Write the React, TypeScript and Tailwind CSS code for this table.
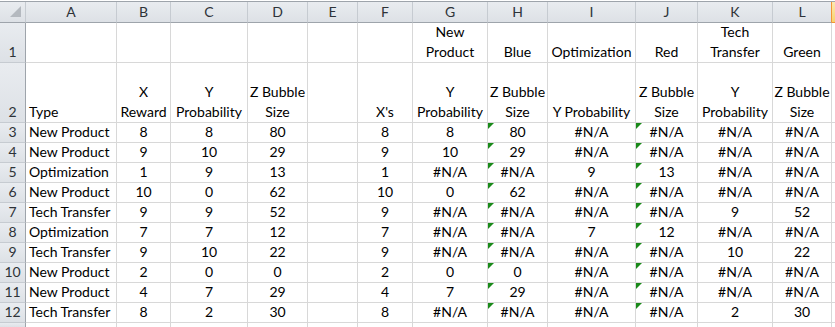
import { Fragment } from 'react'

const NA = '#N/A'

const colLetters = ['A', 'B', 'C', 'D', 'E', 'F', 'G', 'H', 'I', 'J', 'K', 'L']

const row1: string[][] = [[], [], [], [], [], [], ['New', 'Product'], ['Blue'], ['Optimization'], ['Red'], ['Tech', 'Transfer'], ['Green']]

const row2: string[][] = [
  ['Type'],
  ['X', 'Reward'],
  ['Y', 'Probability'],
  ['Z Bubble', 'Size'],
  [],
  ["X's"],
  ['Y', 'Probability'],
  ['Z Bubble', 'Size'],
  ['Y Probability'],
  ['Z Bubble', 'Size'],
  ['Y', 'Probability'],
  ['Z Bubble', 'Size'],
]

const data: (string | number)[][] = [
  ['New Product', 8, 8, 80, '', 8, 8, 80, NA, NA, NA, NA],
  ['New Product', 9, 10, 29, '', 9, 10, 29, NA, NA, NA, NA],
  ['Optimization', 1, 9, 13, '', 1, NA, NA, 9, 13, NA, NA],
  ['New Product', 10, 0, 62, '', 10, 0, 62, NA, NA, NA, NA],
  ['Tech Transfer', 9, 9, 52, '', 9, NA, NA, NA, NA, 9, 52],
  ['Optimization', 7, 7, 12, '', 7, NA, NA, 7, 12, NA, NA],
  ['Tech Transfer', 9, 10, 22, '', 9, NA, NA, NA, NA, 10, 22],
  ['New Product', 2, 0, 0, '', 2, 0, 0, NA, NA, NA, NA],
  ['New Product', 4, 7, 29, '', 4, 7, 29, NA, NA, NA, NA],
  ['Tech Transfer', 8, 2, 30, '', 8, NA, NA, NA, NA, 2, 30],
]

const hdr = 'bg-gradient-to-b from-[#e9ecf0] to-[#dde1e6] text-[#2e3338]'

// little green "number stored as text" corner
function ErrorMark() {
  return (
    <svg className="absolute left-0 top-0" width="6" height="6" viewBox="0 0 6 6">
      <polygon points="0,0 6,0 0,6" fill="#1a8a1a" />
    </svg>
  )
}

function RowHead({ n, h }: { n?: number; h: string }) {
  return (
    <div className={`${h} ${hdr} border-r border-b border-r-[#9ea4ab] border-b-[#c6cbd1] flex items-end justify-center leading-[20px]`}>
      {n}
    </div>
  )
}

function HeadCell({ lines, h, left }: { lines: string[]; h: string; left?: boolean }) {
  return (
    <div
      className={`${h} border-r border-b border-[#d8d8d8] flex flex-col justify-end leading-[20px] whitespace-nowrap ${
        left ? 'items-start pl-[3px]' : 'items-center'
      }`}
    >
      {lines.map((l) => (
        <span key={l}>{l}</span>
      ))}
    </div>
  )
}

export default function App() {
  return (
    <div className="w-[835px] h-[327px] overflow-hidden bg-white pt-px text-[14px] text-black [font-family:Lato,'Liberation_Sans',sans-serif]">
      <div className="grid grid-cols-[26px_91px_54px_77px_60px_50px_55px_75px_60px_88px_62px_75px_59px_3px] border-t border-[#9ea4ab]">
        {/* column headers */}
        <div className={`h-[21px] ${hdr} border-r border-b border-r-[#c6cbd1] border-b-[#9ea4ab] relative`}>
          <svg className="absolute left-[10px] top-[4px]" width="11" height="11" viewBox="0 0 11 11">
            <polygon points="11,0 11,11 0,11" fill="#b4b9bf" />
          </svg>
        </div>
        {colLetters.map((c) => (
          <div
            key={c}
            className={`h-[21px] ${hdr} border-r border-b border-b-[#9ea4ab] flex items-center justify-center leading-none ${
              c === 'L' ? 'border-r-[#f29536]' : 'border-r-[#c6cbd1]'
            }`}
          >
            {c}
          </div>
        ))}
        <div className="h-[21px] bg-gradient-to-b from-[#fde9b0] to-[#f8d36d] border-b border-b-[#f29536]" />

        {/* row 1 */}
        <RowHead n={1} h="h-[40px]" />
        {row1.map((lines, i) => (
          <HeadCell key={i} lines={lines} h="h-[40px]" />
        ))}
        <div className="h-[40px] border-b border-[#d8d8d8]" />

        {/* row 2 */}
        <RowHead n={2} h="h-[60px]" />
        {row2.map((lines, i) => (
          <HeadCell key={i} lines={lines} h="h-[60px]" left={i === 0} />
        ))}
        <div className="h-[60px] border-b border-[#d8d8d8]" />

        {data.map((r, ri) => (
          <Fragment key={ri}>
            <RowHead n={ri + 3} h="h-[20px]" />
            {r.map((v, ci) => (
              <div
                key={ci}
                className={`h-[20px] relative border-r border-b border-[#d8d8d8] flex items-end leading-[20px] whitespace-nowrap ${
                  ci === 0 ? 'pl-[3px]' : 'justify-center'
                }`}
              >
                {(ci === 7 || ci === 9) && <ErrorMark />}
                {v}
              </div>
            ))}
            <div className="h-[20px] border-b border-[#d8d8d8]" />
          </Fragment>
        ))}

        {/* row 13, cut off */}
        <div className={`h-[4px] ${hdr} border-r border-r-[#9ea4ab]`} />
        {colLetters.map((c) => (
          <div key={`p${c}`} className="h-[4px] border-r border-[#d8d8d8]" />
        ))}
        <div className="h-[4px]" />
      </div>
    </div>
  )
}
